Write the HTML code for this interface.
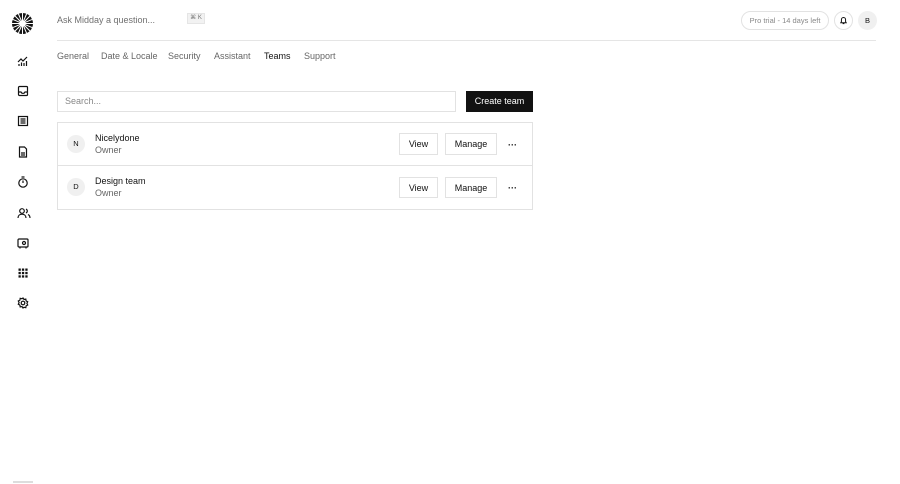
<!DOCTYPE html><html><head><style>
*{margin:0;padding:0;box-sizing:border-box}
body{width:900px;height:484px;background:#fff;font-family:"Liberation Sans",sans-serif;color:#121212;position:relative;overflow:hidden}
.a{position:absolute}
.t{font-size:9px;color:#666}
.btn{position:absolute;border:1px solid #e2e2e2;background:#fff;font-size:9px;display:flex;align-items:center;justify-content:center;color:#121212}
.ic{position:absolute;left:17px;width:12px;height:12px}
</style></head><body>
<svg class="a" style="left:12px;top:13px" width="21" height="21" viewBox="0 0 20 20"><circle cx="10" cy="10" r="10" fill="#121212"/><g stroke="#fff" stroke-width="1"><line x1="10" y1="0" x2="10" y2="20"/><line x1="0" y1="10" x2="20" y2="10"/><line x1="3" y1="3" x2="17" y2="17"/><line x1="17" y1="3" x2="3" y2="17"/><line x1="6" y1="0.5" x2="14" y2="19.5"/><line x1="14" y1="0.5" x2="6" y2="19.5"/><line x1="0.5" y1="6" x2="19.5" y2="14"/><line x1="0.5" y1="14" x2="19.5" y2="6"/></g><circle cx="10" cy="10" r="3" fill="#fff"/></svg>
<div class="a" style="left:57px;top:15px;font-size:9px;color:#707070">Ask Midday a question...</div>
<div class="a" style="left:187px;top:13px;width:18px;height:11px;background:#f2f2f2;border:1px solid #e5e5e5;font-size:6px;color:#777;text-align:center;line-height:9px">⌘ K</div>
<div class="a" style="left:741px;top:11px;width:88px;height:19px;border:1px solid #e2e2e2;border-radius:10px;font-size:7.5px;color:#888;text-align:center;line-height:17px">Pro trial - 14 days left</div>
<div class="a" style="left:834px;top:11px;width:19px;height:19px;border:1px solid #e2e2e2;border-radius:50%"></div>
<svg class="a" style="left:839px;top:16px" width="9" height="9" viewBox="0 0 10 10"><path d="M2 7.5h6L7.3 6.3V4a2.3 2.3 0 0 0-4.6 0v2.3z M4 8.5h2" fill="none" stroke="#121212" stroke-width="1.1"/></svg>
<div class="a" style="left:858px;top:11px;width:19px;height:19px;border-radius:50%;background:#f0f0f0;font-size:7.5px;text-align:center;line-height:19px">B</div>
<div class="a" style="left:57px;top:40px;width:819px;height:1px;background:#e5e5e5"></div>
<div class="a t" style="left:57px;top:51px">General</div>
<div class="a t" style="left:101px;top:51px">Date &amp; Locale</div>
<div class="a t" style="left:168px;top:51px">Security</div>
<div class="a t" style="left:214px;top:51px">Assistant</div>
<div class="a" style="left:264px;top:51px;font-size:9px">Teams</div>
<div class="a t" style="left:304px;top:51px">Support</div>
<svg class="ic" style="top:55px" viewBox="0 0 12 12" fill="none" stroke="#121212" stroke-width="1.2"><path d="M1 7l3-3 2 2 4-4M2 11V9M4.5 11V7.5M7 11V8M9.5 11V6"/></svg>
<svg class="ic" style="top:85px" viewBox="0 0 12 12" fill="none" stroke="#121212" stroke-width="1.2"><rect x="1.5" y="1.5" width="9" height="9" rx="1"/><path d="M1.5 7h2.5l1 1.3h2L8 7h2.5"/></svg>
<svg class="ic" style="top:115px" viewBox="0 0 12 12" fill="none" stroke="#121212" stroke-width="1.2"><rect x="1.5" y="1.5" width="9" height="9"/><path d="M3.5 4h5M3.5 6h5M3.5 8h5"/></svg>
<svg class="ic" style="top:146px" viewBox="0 0 12 12" fill="none" stroke="#121212" stroke-width="1.2"><path d="M2.5 1h5l2 2v8h-7z M4 7h4M4 9h4"/></svg>
<svg class="ic" style="top:176px" viewBox="0 0 12 12" fill="none" stroke="#121212" stroke-width="1.2"><circle cx="6" cy="7" r="4.2"/><path d="M4.5 1h3M6 7V4.5"/></svg>
<svg class="ic" style="top:207px;width:14px" viewBox="0 0 14 12" fill="none" stroke="#121212" stroke-width="1.2"><circle cx="5" cy="4" r="2.3"/><path d="M1 11c0-2.5 1.8-3.8 4-3.8s4 1.3 4 3.8M9 2a2.2 2.2 0 0 1 0 4M11 7.5c1.3.6 2 1.8 2 3.5"/></svg>
<svg class="ic" style="top:237px" viewBox="0 0 12 12" fill="none" stroke="#121212" stroke-width="1.2"><rect x="1" y="2" width="10" height="8" rx="1"/><circle cx="7" cy="6" r="1.5"/><path d="M3 10.5v1M9 10.5v1"/></svg>
<svg class="ic" style="top:267px" viewBox="0 0 12 12" fill="#121212"><rect x="1.5" y="1.5" width="2.3" height="2.3"/><rect x="4.9" y="1.5" width="2.3" height="2.3"/><rect x="8.3" y="1.5" width="2.3" height="2.3"/><rect x="1.5" y="4.9" width="2.3" height="2.3"/><rect x="4.9" y="4.9" width="2.3" height="2.3"/><rect x="8.3" y="4.9" width="2.3" height="2.3"/><rect x="1.5" y="8.3" width="2.3" height="2.3"/><rect x="4.9" y="8.3" width="2.3" height="2.3"/><rect x="8.3" y="8.3" width="2.3" height="2.3"/></svg>
<svg class="ic" style="top:297px" viewBox="0 0 12 12" fill="none" stroke="#121212" stroke-width="1.2"><circle cx="6" cy="6" r="1.8"/><path d="M6 1l1 1.5 1.8-.4.3 1.8 1.6.9-.8 1.6.8 1.6-1.6.9-.3 1.8-1.8-.4L6 11l-1-1.5-1.8.4-.3-1.8-1.6-.9.8-1.6-.8-1.6 1.6-.9.3-1.8 1.8.4z"/></svg>
<div class="a" style="left:13px;top:481px;width:20px;height:2px;background:#ddd"></div>
<div class="a" style="left:57px;top:91px;width:399px;height:21px;border:1px solid #e2e2e2;font-size:9px;color:#888;padding-left:7px;line-height:19px">Search...</div>
<div class="a" style="left:466px;top:91px;width:67px;height:21px;background:#121212;color:#fff;font-size:9px;text-align:center;line-height:21px">Create team</div>
<div class="a" style="left:57px;top:122px;width:476px;height:88px;border:1px solid #e2e2e2"></div>
<div class="a" style="left:57px;top:165px;width:476px;height:1px;background:#e2e2e2"></div>
<div class="a" style="left:67px;top:135px;width:18px;height:18px;border-radius:50%;background:#f0f0f0;font-size:7.5px;text-align:center;line-height:18px">N</div>
<div class="a" style="left:95px;top:133px;font-size:9px">Nicelydone</div>
<div class="a t" style="left:95px;top:145px">Owner</div>
<div class="btn" style="left:399px;top:133px;width:39px;height:22px">View</div>
<div class="btn" style="left:445px;top:133px;width:52px;height:22px">Manage</div>
<div class="a" style="left:508px;top:140px;font-size:9px;font-weight:bold">···</div>
<div class="a" style="left:67px;top:178px;width:18px;height:18px;border-radius:50%;background:#f0f0f0;font-size:7.5px;text-align:center;line-height:18px">D</div>
<div class="a" style="left:95px;top:176px;font-size:9px">Design team</div>
<div class="a t" style="left:95px;top:188px">Owner</div>
<div class="btn" style="left:399px;top:177px;width:39px;height:21px">View</div>
<div class="btn" style="left:445px;top:177px;width:52px;height:21px">Manage</div>
<div class="a" style="left:508px;top:183px;font-size:9px;font-weight:bold">···</div>
</body></html>
